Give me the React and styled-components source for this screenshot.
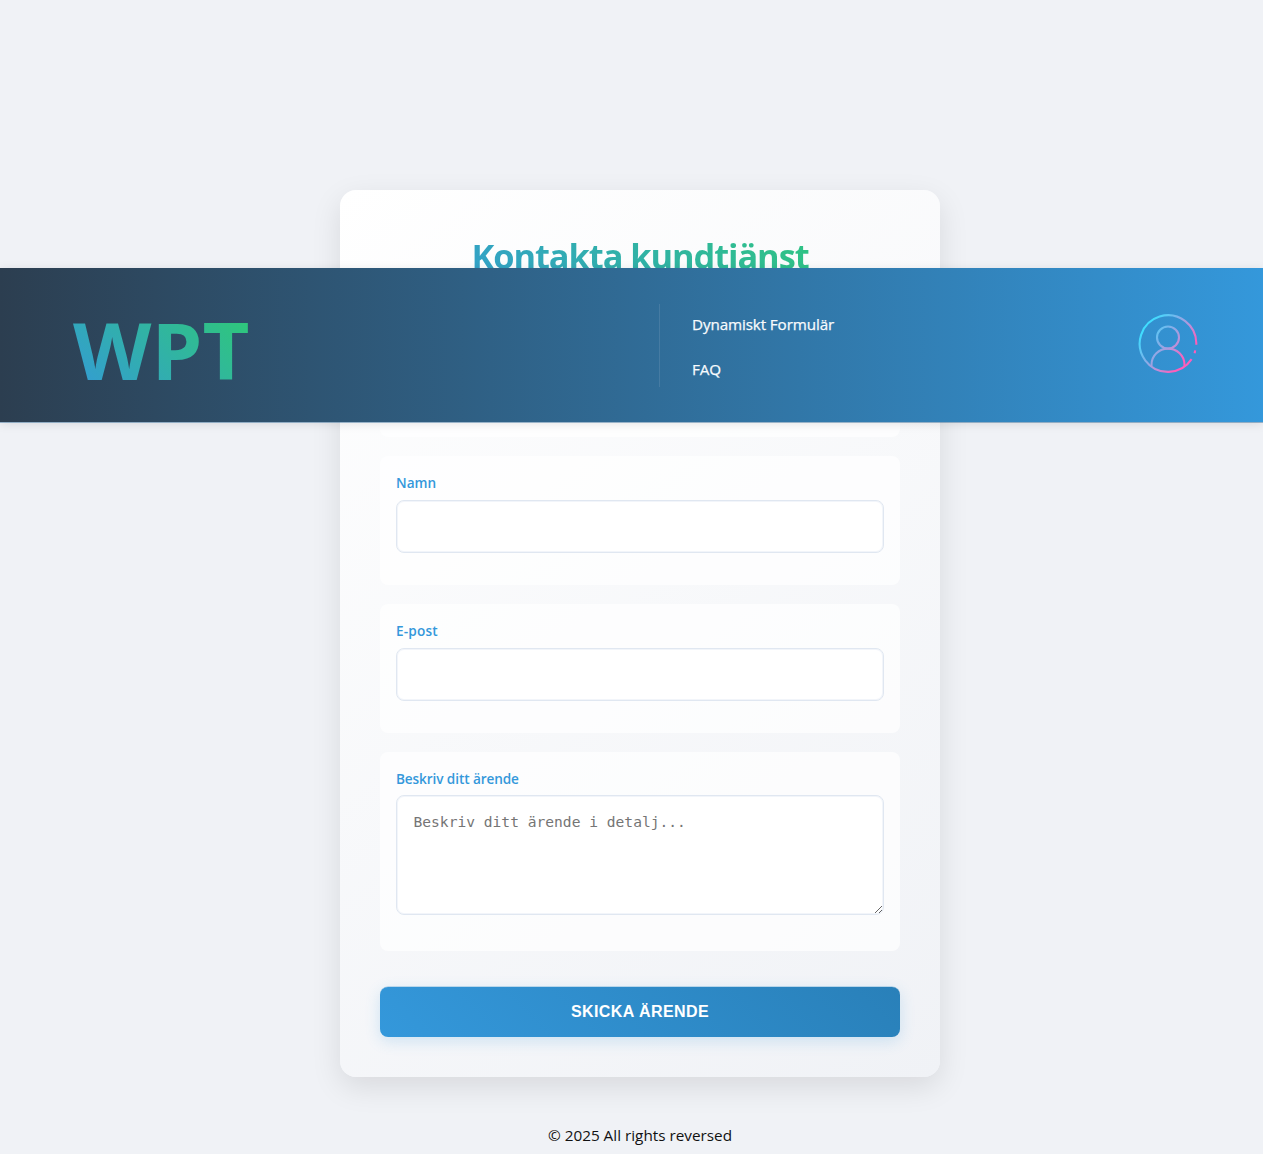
import React from 'react';
import styled, { createGlobalStyle } from 'styled-components';

const GlobalStyle = createGlobalStyle`
  *, *::before, *::after { box-sizing: border-box; }
  html { overflow: hidden; }
  body {
    margin: 0;
    background: #f0f2f6;
    color: #111;
    font-family: 'Open Sans', 'Noto Sans', sans-serif;
    font-size: 16px;
  }
`;

const Page = styled.div`
  position: relative;
  width: 1280px;
  height: 1154px;
  overflow: hidden;
  display: flex;
  flex-direction: column;
  align-items: center;
  padding-top: 190.4px;
`;

const Header = styled.header`
  position: absolute;
  top: 268px;
  left: 0;
  z-index: 10;
  width: 1263px;
  height: 154px;
  padding: 0 65px 0 72px;
  display: grid;
  grid-template-columns: 587px 1fr 60px;
  align-items: center;
  background: linear-gradient(90deg, #2c3e50, #3498db);
  box-shadow: 0 1px 0 rgba(48, 107, 152, 0.45), 0 2px 10px rgba(0, 0, 0, 0.1);
`;

const Logo = styled.div`
  justify-self: start;
  margin-top: 9px;
  padding-left: 1px;
  font-size: 78px;
  font-weight: 700;
  line-height: 106px;
  transform: scaleX(1.04);
  transform-origin: left center;
  background: linear-gradient(45deg, #3498db, #2ecc71);
  background-clip: text;
  -webkit-background-clip: text;
  color: transparent;
`;

const Nav = styled.nav`
  height: 83px;
  display: flex;
  flex-direction: column;
  justify-content: space-between;
  padding: 8px 0 6px 32px;
  border-left: 1px solid rgba(255, 255, 255, 0.1);
`;

const NavLink = styled.a`
  color: #f8fbfd;
  font-size: 15.2px;
  font-weight: 500;
  line-height: 24px;
  letter-spacing: -0.1px;
  -webkit-text-stroke: 0.25px #f8fbfd;
`;

const Avatar = styled.svg`
  display: block;
  width: 60px;
  height: 60px;
  margin-top: -3px;
`;

const Card = styled.main`
  width: 600px;
  height: 886.6px;
  flex: none;
  padding: 42px 40px 40px;
  display: flex;
  flex-direction: column;
  border-radius: 16px;
  background: linear-gradient(145deg, #ffffff, #f0f2f6);
  box-shadow: 0 10px 30px rgba(0, 0, 0, 0.1);
`;

const Title = styled.h1`
  margin: 0 0 28px;
  font-size: 34.4px;
  font-weight: 700;
  line-height: 48px;
  letter-spacing: -1.08px;
  text-align: center;
  white-space: nowrap;
  background: linear-gradient(45deg, #3498db, #2ecc71);
  background-clip: text;
  -webkit-background-clip: text;
  color: transparent;
`;

const Group = styled.div`
  height: ${(p) => p.$height};
  margin-bottom: 19.6px;
  flex: none;
  padding: 17px 16px 16px;
  display: flex;
  flex-direction: column;
  border-radius: 8px;
  background: rgba(255, 255, 255, 0.7);
`;

const Label = styled.label`
  margin-bottom: ${(p) => p.$gap || '7px'};
  color: #3498db;
  font-size: 13.6px;
  font-weight: 600;
  line-height: 20px;
  letter-spacing: ${(p) => p.$tracking || '0'};
`;

const fieldLook = `
  width: 100%;
  border: 1px solid #e0e7f1;
  border-radius: 8px;
  background: #fff;
  box-shadow: inset 0 0 0 1px #f2f5fa;
  outline: none;
`;

const Input = styled.input`
  ${fieldLook}
  height: 53px;
  padding: 0 16px;
`;

const Select = styled.select`
  ${fieldLook}
  height: 53px;
  padding: 0 16px;
`;

const TextArea = styled.textarea`
  ${fieldLook}
  display: block;
  height: 119.5px;
  padding: 17px 16.5px;
  font-family: 'DejaVu Sans Mono', monospace;
  font-size: 14.6px;
  line-height: 18px;
  resize: vertical;
  &::placeholder { color: #757575; }
`;

const Submit = styled.button`
  height: 50.4px;
  flex: none;
  margin-top: 16px;
  border: 0;
  border-radius: 8px;
  background: linear-gradient(45deg, #3498db, #2980b9);
  box-shadow: 0 -0.5px 0 rgba(45, 140, 202, 0.5), 0 4px 15px rgba(52, 152, 219, 0.2);
  color: #fff;
  font: 700 16px/20px 'Liberation Sans', Arial, sans-serif;
  letter-spacing: 0.42px;
  text-transform: uppercase;
`;

const Footer = styled.footer`
  margin-top: 46px;
  font-size: 15.3px;
  line-height: 24px;
`;

function UserIcon() {
  return (
    <Avatar viewBox="0 0 60 60" fill="none" aria-hidden="true">
      <defs>
        <linearGradient id="ring" gradientUnits="userSpaceOnUse" x1="8" y1="14" x2="50" y2="46">
          <stop offset="0" stopColor="#40ddff" />
          <stop offset="0.3" stopColor="#72b8ed" />
          <stop offset="0.62" stopColor="#b993da" />
          <stop offset="0.92" stopColor="#ff5dba" />
        </linearGradient>
      </defs>
      <g stroke="url(#ring)" strokeWidth="2.1">
        <path d="M58.3 30.7A28.3 28.3 0 1 0 53.6 45.2" />
        <path d="M57.2 36.4l-.6 2.8" />
        <circle cx="30" cy="23.5" r="11" />
        <path d="M13.5 52V50.8a16.5 16.2 0 0 1 33 0V52" />
      </g>
    </Avatar>
  );
}

export default function App() {
  return (
    <>
      <GlobalStyle />
      <Page>
        <Header>
          <Logo>WPT</Logo>
          <Nav>
            <NavLink>Dynamiskt Formulär</NavLink>
            <NavLink>FAQ</NavLink>
          </Nav>
          <UserIcon />
        </Header>
        <Card>
          <Title>Kontakta kundtjänst</Title>
          <Group $height="128.4px">
            <Select aria-label="Kategori" />
          </Group>
          <Group $height="128.4px">
            <Label>Namn</Label>
            <Input />
          </Group>
          <Group $height="128.4px">
            <Label $tracking="0.2px">E-post</Label>
            <Input />
          </Group>
          <Group $height="198.6px">
            <Label $gap="6px" $tracking="-0.1px">Beskriv ditt ärende</Label>
            <TextArea placeholder="Beskriv ditt ärende i detalj..." />
          </Group>
          <Submit>Skicka ärende</Submit>
        </Card>
        <Footer>© 2025 All rights reversed</Footer>
      </Page>
    </>
  );
}
